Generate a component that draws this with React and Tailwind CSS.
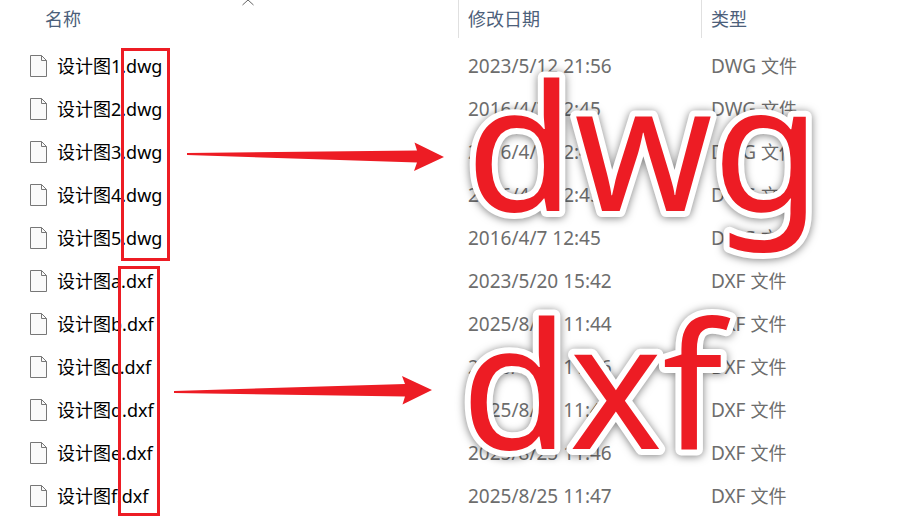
import React, { useState } from 'react';

const files = [
    { name: '设计图1.dwg', date: '2023/5/12 21:56', type: 'DWG' },
    { name: '设计图2.dwg', date: '2016/4/7 12:45', type: 'DWG' },
    { name: '设计图3.dwg', date: '2016/4/7 12:45', type: 'DWG' },
    { name: '设计图4.dwg', date: '2016/4/7 12:45', type: 'DWG' },
    { name: '设计图5.dwg', date: '2016/4/7 12:45', type: 'DWG' },
    { name: '设计图a.dxf', date: '2023/5/20 15:42', type: 'DXF' },
    { name: '设计图b.dxf', date: '2025/8/25 11:44', type: 'DXF' },
    { name: '设计图c.dxf', date: '2025/8/25 11:46', type: 'DXF' },
    { name: '设计图d.dxf', date: '2025/8/25 11:45', type: 'DXF' },
    { name: '设计图e.dxf', date: '2025/8/25 11:46', type: 'DXF' },
    { name: '设计图f.dxf', date: '2025/8/25 11:47', type: 'DXF' },
];

const FileIcon = () => (
    <svg width="18" height="22" viewBox="0 0 18 22" className="shrink-0" aria-hidden="true">
        <path d="M.5.5H11.5L16.5 5.5V21.5H.5Z" fill="#fafafa" stroke="#777" />
        <path d="M11.5.5V5.5H16.5" fill="none" stroke="#777" />
    </svg>
);

const Arrow = ({ points, className }) => (
    <svg width="258" height="30" viewBox="0 0 258 30" className={className} aria-hidden="true">
        <polygon points={points} fill="#ed1c24" />
    </svg>
);

// sticker style lettering: red fill, rounded white outline, soft shadow
const BigLabel = ({ className, children }) => (
    <svg
        width="370"
        height="200"
        className={`absolute overflow-visible drop-shadow-[0_1px_4px_rgba(0,0,0,0.5)] ${className}`}
    >
        <text
            x="0"
            y="150"
            strokeWidth="12"
            strokeLinejoin="round"
            className="fill-[#ed1c24] stroke-white text-[176px] [paint-order:stroke_fill]"
        >
            {children}
        </text>
    </svg>
);

const App = () => {
    const [ascending, setAscending] = useState(true);
    const rows = ascending ? files : [...files].reverse();

    return (
        <div className="relative overflow-hidden bg-white font-['Noto_Sans','Noto_Sans_CJK_SC',sans-serif]">
            <table className="w-full table-fixed border-collapse text-left">
                <colgroup>
                    <col className="w-[459px]" />
                    <col className="w-[243px]" />
                    <col />
                </colgroup>
                <thead>
                    <tr className="h-[44px] align-top text-lg text-[#4c607a]">
                        <th className="relative p-0 font-normal">
                            <button
                                type="button"
                                onClick={() => setAscending(!ascending)}
                                className="flex h-[38px] w-full items-center border-r border-[#e0e0e0] pl-[45px]"
                            >
                                名称
                            </button>
                            <svg width="12" height="6" viewBox="0 0 12 6" className="absolute left-[242px] top-0" aria-hidden="true">
                                <path d={ascending ? 'M.5 5 6 0 11.5 5' : 'M.5 0 6 5 11.5 0'} fill="none" stroke="#666" />
                            </svg>
                        </th>
                        <th className="p-0 font-normal">
                            <button type="button" className="flex h-[38px] w-full items-center border-r border-[#e0e0e0] pl-[9px]">
                                修改日期
                            </button>
                        </th>
                        <th className="p-0 font-normal">
                            <button type="button" className="flex h-[38px] w-full items-center pl-[9px]">
                                类型
                            </button>
                        </th>
                    </tr>
                </thead>
                <tbody>
                    {rows.map((file) => (
                        <tr key={file.name} className="h-[43px] text-[19px] leading-6 text-[#6d6d6d]">
                            <td className="p-0">
                                <div className="flex items-center gap-[9px] pl-[30px] text-lg leading-6 text-black">
                                    <FileIcon />
                                    <span>{file.name}</span>
                                </div>
                            </td>
                            <td className="p-0 pl-[9px]">{file.date}</td>
                            <td className="p-0 pl-[9px]">
                                {file.type} <span className="text-lg leading-6">文件</span>
                            </td>
                        </tr>
                    ))}
                </tbody>
            </table>

            {/* extension highlights */}
            <div className="pointer-events-none absolute inset-0">
                <div className="absolute left-[121px] top-[48px] h-[213px] w-[49px] border-3 border-[#ed1c24]" />
                <div className="absolute left-[118px] top-[266px] h-[250px] w-[42px] border-3 border-[#ed1c24]" />
                <Arrow
                    className="absolute left-[187px] top-[142px]"
                    points="0,11 230,8.5 227.5,0.5 257,15 227,29 230,20.5 0,13"
                />
                <Arrow
                    className="absolute left-[174px] top-[375px]"
                    points="0,16 231,9 228,1 258,15 228.5,29.5 231,21.5 0,18"
                />
                <BigLabel className="left-[466px] top-[61px]">dwg</BigLabel>
                <BigLabel className="left-[461px] top-[299px]">dxf</BigLabel>
            </div>
        </div>
    );
};

export default App;
